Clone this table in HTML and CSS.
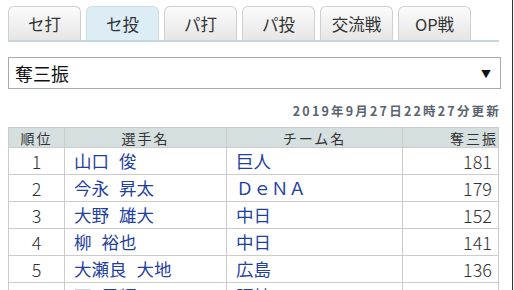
FILE: index.html
```html
<!DOCTYPE html>
<html lang="ja">
<head>
<meta charset="utf-8">
<link rel="stylesheet" href="styles.css">
</head>
<body>
<div class="frame">
<div class="page">
  <ul class="tabs">
    <li class="tab">セ打</li>
    <li class="tab active">セ投</li>
    <li class="tab">パ打</li>
    <li class="tab">パ投</li>
    <li class="tab">交流戦</li>
    <li class="tab">OP戦</li>
  </ul>
  <div class="select">
    <span class="select-text">奪三振</span>
    <span class="arrow">▼</span>
  </div>
  <div class="updated">2019年9月27日22時27分更新</div>
  <table class="rank">
    <thead>
      <tr><th class="c-rank">順位</th><th class="c-name">選手名</th><th class="c-team">チーム名</th><th class="c-val">奪三振</th></tr>
    </thead>
    <tbody>
      <tr><td class="c-rank">1</td><td class="c-name link">山口 俊</td><td class="c-team link">巨人</td><td class="c-val">181</td></tr>
      <tr><td class="c-rank">2</td><td class="c-name link">今永 昇太</td><td class="c-team link">ＤｅＮＡ</td><td class="c-val">179</td></tr>
      <tr><td class="c-rank">3</td><td class="c-name link">大野 雄大</td><td class="c-team link">中日</td><td class="c-val">152</td></tr>
      <tr><td class="c-rank">4</td><td class="c-name link">柳 裕也</td><td class="c-team link">中日</td><td class="c-val">141</td></tr>
      <tr><td class="c-rank">5</td><td class="c-name link">大瀬良 大地</td><td class="c-team link">広島</td><td class="c-val">136</td></tr>
      <tr><td class="c-rank">6</td><td class="c-name link">西 勇輝</td><td class="c-team link">阪神</td><td class="c-val">125</td></tr>
    </tbody>
  </table>
</div>
</div>
</body>
</html>
```
FILE: styles.css
```css
html, body {
  margin: 0;
  padding: 0;
  background: #fff;
  overflow: hidden;
}
body {
  font-family: "Noto Sans CJK JP", "DejaVu Sans", sans-serif;
  color: #222;
}
.frame {
  width: 513px;
  height: 290px;
  border-right: 1px solid #333;
  box-sizing: border-box;
  overflow: hidden;
}
.page {
  width: 491px;
  padding: 6px 0 0 8px;
}
.tabs {
  list-style: none;
  margin: 0;
  padding: 0;
  display: flex;
  gap: 5px;
  border-bottom: 2px solid #c8d4d8;
  height: 34px;
}
.tab {
  width: 71px;
  border: 1px solid #cfcfcf;
  border-bottom: none;
  border-radius: 6px 6px 0 0;
  background: linear-gradient(#fbfbfb, #e6e6e6);
  display: flex;
  align-items: center;
  justify-content: center;
  font-size: 16.5px;
  color: #333;
  line-height: 1;
  padding-top: 2px;
}
.tab.active {
  background: #dcedf5;
  border-color: #cfdde3;
}
.select {
  margin-top: 15px;
  height: 32px;
  border: 1px solid #aaa;
  display: flex;
  align-items: center;
  justify-content: space-between;
  padding: 0 9px 0 6px;
  box-sizing: border-box;
  width: 493px;
}
.select-text {
  font-size: 18px;
  color: #111;
}
.arrow {
  font-size: 10px;
  color: #111;
}
.updated {
  margin-top: 14px;
  text-align: right;
  font-size: 12.5px;
  font-weight: bold;
  color: #5a6470;
  letter-spacing: 2.2px;
  line-height: 16px;
  margin-right: -2px;
}
.rank {
  margin-top: 8px;
  width: 491px;
  border-collapse: collapse;
  table-layout: fixed;
}
.rank th, .rank td {
  border: 1px solid #cccccc;
  padding: 0;
}
.rank th {
  background: #d5dfe0;
  height: 19px;
  font-weight: normal;
  font-size: 14px;
  color: #333;
  letter-spacing: 2px;
  line-height: 1;
}
.rank td {
  height: 26px;
  font-size: 17.5px;
  line-height: 1;
}
.c-rank { width: 55px; text-align: center; }
.c-name { width: 161px; }
.c-team { width: 175px; }
.c-val { text-align: right; }
td.c-rank, td.c-val {
  font-weight: 300;
  color: #333;
  font-size: 18px;
}
td.c-val { padding-right: 6px; }
td.link {
  color: #1f3fa3;
  padding-left: 9px;
  word-spacing: 6px;
}
```
